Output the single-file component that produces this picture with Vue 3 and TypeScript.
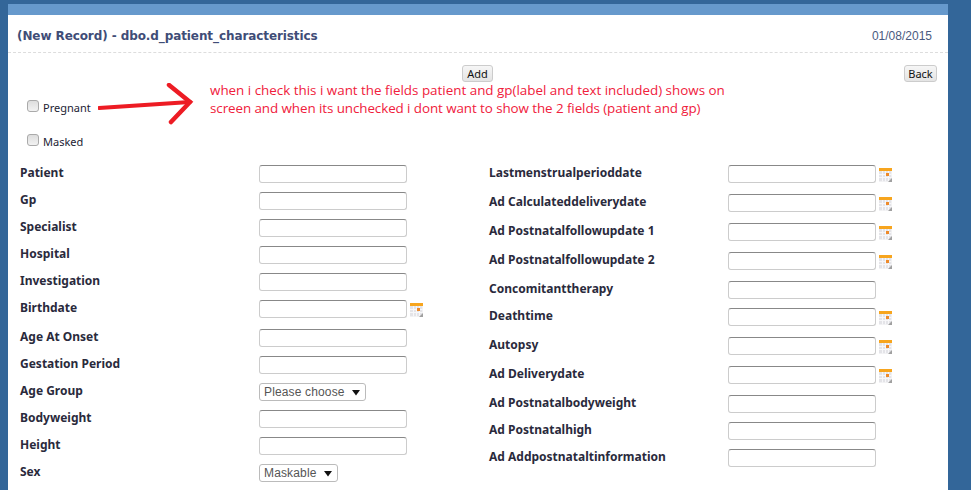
<script setup lang="ts">
interface Field {
  label: string
  type?: 'text' | 'date' | 'select'
  value?: string
}

const leftFields: Field[] = [
  { label: 'Patient' },
  { label: 'Gp' },
  { label: 'Specialist' },
  { label: 'Hospital' },
  { label: 'Investigation' },
  { label: 'Birthdate', type: 'date' },
  { label: 'Age At Onset' },
  { label: 'Gestation Period' },
  { label: 'Age Group', type: 'select', value: 'Please choose' },
  { label: 'Bodyweight' },
  { label: 'Height' },
  { label: 'Sex', type: 'select', value: 'Maskable' },
]

const rightFields: Field[] = [
  { label: 'Lastmenstrualperioddate', type: 'date' },
  { label: 'Ad Calculateddeliverydate', type: 'date' },
  { label: 'Ad Postnatalfollowupdate 1', type: 'date' },
  { label: 'Ad Postnatalfollowupdate 2', type: 'date' },
  { label: 'Concomitanttherapy' },
  { label: 'Deathtime', type: 'date' },
  { label: 'Autopsy', type: 'date' },
  { label: 'Ad Deliverydate', type: 'date' },
  { label: 'Ad Postnatalbodyweight' },
  { label: 'Ad Postnatalhigh' },
  { label: 'Ad Addpostnataltinformation' },
]

const columns = [leftFields, rightFields]
</script>

<template>
  <div class="page">
    <div class="panel">
      <div class="stripe"></div>
      <header class="head">
        <h1>(New Record) - dbo.d_patient_characteristics</h1>
        <span class="date">01/08/2015</span>
      </header>

      <div class="actions">
        <button class="btn add" type="button">Add</button>
        <button class="btn back" type="button">Back</button>
      </div>

      <div class="checks">
        <label class="check pregnant"><span class="box"></span>Pregnant</label>
        <label class="check"><span class="box"></span>Masked</label>
      </div>

      <div class="form">
        <div v-for="(col, i) in columns" :key="i" class="col">
          <div v-for="f in col" :key="f.label" class="row" :class="{ tall: f.type === 'date' }">
            <span class="lbl">{{ f.label }}</span>
            <span v-if="f.type === 'select'" class="select">
              {{ f.value }}
              <svg width="8" height="7" viewBox="0 0 8 7"><path d="M0 1h8L4 6.500z" fill="#111" /></svg>
            </span>
            <span v-else class="input"></span>
            <svg v-if="f.type === 'date'" class="cal" width="13" height="14" viewBox="0 0 13 14">
              <rect x="0" y="0" width="13" height="3" fill="#f7a51e" />
              <rect x="0" y="3" width="12.500" height="10.500" fill="#e4e4e8" />
              <path d="M0 6.500h12.500M0 9.500h12.500M3.500 3v10.500M6.500 3v10.500M9.500 3v10.500" stroke="#f7f7f9" fill="none" />
              <rect x="7" y="5" width="3" height="3" fill="#ee8a2a" />
              <path d="M9 14l4-4v4z" fill="#a0a0a0" />
            </svg>
          </div>
        </div>
      </div>

      <!-- annotation drawn on top of the screenshot -->
      <svg class="arrow" width="100" height="46" viewBox="0 0 100 46">
        <path d="M1 25L92 19" stroke="#ed1c24" stroke-width="4" fill="none" stroke-linecap="round" />
        <path d="M71 2L92 19L73 39" stroke="#ed1c24" stroke-width="4.500" fill="none" stroke-linecap="round" />
      </svg>
      <p class="note">
        when i check this i want the fields patient and gp(label and text included) shows on<br />
        <span class="line2">screen and when its unchecked i dont want to show the 2 fields (patient and gp)</span>
      </p>
    </div>
  </div>
</template>

<style>
html, body {
  margin: 0;
  background: #336699;
}
</style>

<style scoped>
.page {
  width: 971px;
  height: 490px;
  overflow: hidden;
  box-sizing: border-box;
  padding: 4px 23px 0 8px;
  background: #336699;
}

.panel {
  position: relative;
  background: #fff;
  height: 486px;
}

.stripe {
  height: 11px;
  background: #6699cc;
}

.head {
  display: flex;
  justify-content: space-between;
  align-items: center;
  box-sizing: content-box;
  height: 33px;
  padding: 4px 16px 0 9px;
  border-bottom: 1px dashed #ddd;
}

.head h1 {
  margin: 0;
  font: bold 12px "DejaVu Sans", sans-serif;
  letter-spacing: -0.09px;
  color: #3f4d77;
}

.date {
  font: 12px "Liberation Sans", sans-serif;
  color: #4a5a80;
}

.actions {
  display: flex;
  justify-content: flex-end;
  gap: 411px;
  padding: 12px 11px 0 0;
}

.btn {
  height: 17px;
  padding: 0;
  border: 1px solid #ccc;
  border-radius: 3px;
  background: linear-gradient(#f6f6f6, #e4e4e4);
  font: 11px "Noto Sans", sans-serif;
  line-height: 14px;
  color: #111;
}

.add {
  width: 31px;
}

.back {
  width: 33px;
}

.checks {
  padding: 16px 0 0 19px;
}

.check {
  display: flex;
  align-items: center;
  height: 18px;
  font: 11px "Noto Sans", sans-serif;
  color: #223;
}

.check.pregnant {
  margin-bottom: 16px;
}

.box {
  width: 10px;
  height: 10px;
  margin: 0 4px 3px 0;
  border: 1px solid #aaa;
  border-radius: 3px;
  background: linear-gradient(#ddd, #f2f2f2);
}

.form {
  display: flex;
  padding: 15px 0 0 12px;
}

.col {
  flex: none;
  width: 469px;
}

.row {
  display: flex;
  align-items: flex-start;
  height: 27px;
}

.row.tall {
  height: 29px;
}

.lbl {
  width: 239px;
  flex: none;
  font: bold 12px/16px "Noto Sans", sans-serif;
  color: #2a2a3c;
}

.input {
  box-sizing: border-box;
  width: 148px;
  height: 18px;
  border: 1px solid #ccc;
  border-top-color: #888;
  border-radius: 3px;
  background: #fff;
}

.select {
  display: flex;
  align-items: center;
  gap: 7px;
  box-sizing: border-box;
  height: 18px;
  padding: 0 5px 0 4px;
  border: 1px solid #bbb;
  border-radius: 3px;
  font: 12px "Liberation Sans", sans-serif;
  letter-spacing: 0.15px;
  color: #555;
}

.cal {
  margin: 3px 0 0 3px;
}

.arrow {
  position: absolute;
  left: 90px;
  top: 79px;
}

.note {
  position: absolute;
  left: 202px;
  top: 77px;
  margin: 0;
  font: 13.400px/18px "Open Sans", sans-serif;
  color: #f0203c;
  white-space: nowrap;
}

.line2 {
  letter-spacing: -0.075px;
}
</style>
